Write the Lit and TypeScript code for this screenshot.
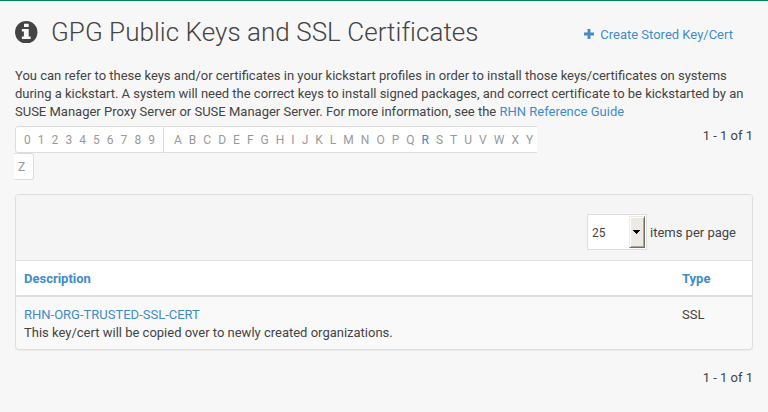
import { LitElement, html, css } from "lit";
import { customElement, property } from "lit/decorators.js";

@customElement("alpha-bar")
class AlphaBar extends LitElement {
  @property() active = "R";

  static styles = css`
    :host { display: block; width: 523px; font-size: 12px; line-height: 26px; color: #999; }
    .row { display: flex; height: 27px; }
    .group {
      display: flex; box-sizing: border-box; height: 27px; gap: 7.05px;
      background: #fff; border: 1px solid #ddd;
    }
    .digits { margin-left: 1px; width: 149px; padding-left: 8px; border-radius: 3px 0 0 3px; }
    .letters { width: 373px; padding-left: 10px; border-left: 0; border-right: 0; gap: 7.02px; }
    .last { width: 20px; padding-left: 4px; border-left: 0; border-radius: 0 3px 3px 0; }
    .on { color: #2f8ade; }
  `;

  private chars(text: string) {
    return [...text].map((c) => html`<span class=${c === this.active ? "on" : "off"}>${c}</span>`);
  }

  render() {
    return html`
      <div class="row">
        <div class="group digits">${this.chars("0123456789")}</div>
        <div class="group letters">${this.chars("ABCDEFGHIJKLMNOPQRSTUVWXY")}</div>
      </div>
      <div class="row"><div class="group last">${this.chars("Z")}</div></div>
    `;
  }
}

@customElement("app-root")
class AppRoot extends LitElement {
  static styles = css`
    :host {
      display: block; box-sizing: border-box; height: 412px; overflow: hidden;
      border-top: 1px solid #008657; background: #f7f7f7; color: #444;
      font: 13px/18px Roboto, sans-serif;
    }
    a { color: #428bca; text-decoration: none; }
    .page { padding: 0 15px; }
    header { display: flex; align-items: center; height: 66px; }
    .info { width: 22.5px; height: 22.5px; margin-right: 13.5px; margin-top: -4px; }
    h1 { margin: -4px 0 0; font-size: 26px; line-height: 34px; font-weight: 300; letter-spacing: 0.045px; }
    .create { display: flex; align-items: center; margin-left: auto; margin-right: 20px; padding-top: 2px; }
    .plus { width: 10px; height: 10px; margin: -2px 6px 0 0; }
    p { margin: 0; white-space: nowrap; }
    .tight { letter-spacing: -0.014px; }
    .filter { display: flex; justify-content: space-between; margin: 5px 0 14px -1px; }
    .panel {
      box-sizing: border-box; height: 156px; border: 1px solid #ddd; border-radius: 4px;
      background: #f9f9f9; box-shadow: 0 1px 1px rgba(0, 0, 0, 0.05); overflow: hidden;
    }
    .tools {
      display: flex; justify-content: flex-end; align-items: center; box-sizing: border-box;
      height: 66px; padding: 9px 16px 0 0; border-bottom: 1px solid #ddd; background: #f5f5f5;
    }
    .select {
      display: flex; align-items: center; box-sizing: border-box; width: 60px; height: 36px;
      margin-right: 3px; padding: 0 1px 0 4px; border: 1px solid #ddd; background: #fff;
      font-size: 12px; justify-content: space-between;
    }
    .value, .label { padding-top: 2px; }
    .arrow {
      display: flex; align-items: center; justify-content: center; box-sizing: border-box;
      width: 16px; height: 32px; background: #edeae5;
      border: 1px solid; border-color: #edeae5 #716f64 #716f64 #edeae5;
      box-shadow: inset 1px 1px #fff, inset -1px -1px #aca899;
    }
    .arrow svg { width: 7px; height: 4px; margin-right: 1px; }
    .cols { display: grid; grid-template-columns: 658px 1fr; padding-left: 8px; }
    .head { height: 34px; line-height: 35px; border-bottom: 2px solid #ddd; background: #fff; font-weight: 700; }
    .data { padding-top: 9px; }
    .total { text-align: right; }
    .filter .total { padding-top: 1px; }
    .foot { margin-top: 19px; }
  `;

  render() {
    return html`
      <div class="page">
        <header>
          <svg class="info" viewBox="0 0 22.5 22.5">
            <circle cx="11.25" cy="11.25" r="11.2" fill="#444" />
            <path fill="#f7f7f7" d="M9 2.7h4.7v3.4H9zM6.9 8h6.8v7.4h1.9V18H6.9v-2.6h2v-4.8h-2z" />
          </svg>
          <h1>GPG Public Keys and SSL Certificates</h1>
          <a class="create">
            <svg class="plus" viewBox="0 0 10 10"><path fill="#428bca" d="M3.6 0h2.8v3.6H10v2.8H6.4V10H3.6V6.4H0V3.6h3.6z" /></svg>
            Create Stored Key/Cert
          </a>
        </header>
        <p>
          You can refer to these keys and/or certificates in your kickstart profiles in order to install those keys/certificates on systems<br />
          <span class="tight">during a kickstart. A system will need the correct keys to install signed packages, and correct certificate to be kickstarted by an</span><br />
          SUSE Manager Proxy Server or SUSE Manager Server. For more information, see the <a>RHN Reference Guide</a>
        </p>
        <div class="filter">
          <alpha-bar></alpha-bar>
          <div class="total">1 - 1 of 1</div>
        </div>
        <div class="panel">
          <div class="tools">
            <div class="select">
              <span class="value">25</span>
              <span class="arrow"><svg viewBox="0 0 7 4" shape-rendering="crispEdges"><path d="M0 0h7v1H6v1H5v1H4v1H3V3H2V2H1V1H0z" /></svg></span>
            </div>
            <span class="label">items per page</span>
          </div>
          <div class="cols head"><a>Description</a><a>Type</a></div>
          <div class="cols data">
            <div><a>RHN-ORG-TRUSTED-SSL-CERT</a><br />This key/cert will be copied over to newly created organizations.</div>
            <div>SSL</div>
          </div>
        </div>
        <div class="total foot">1 - 1 of 1</div>
      </div>
    `;
  }
}
